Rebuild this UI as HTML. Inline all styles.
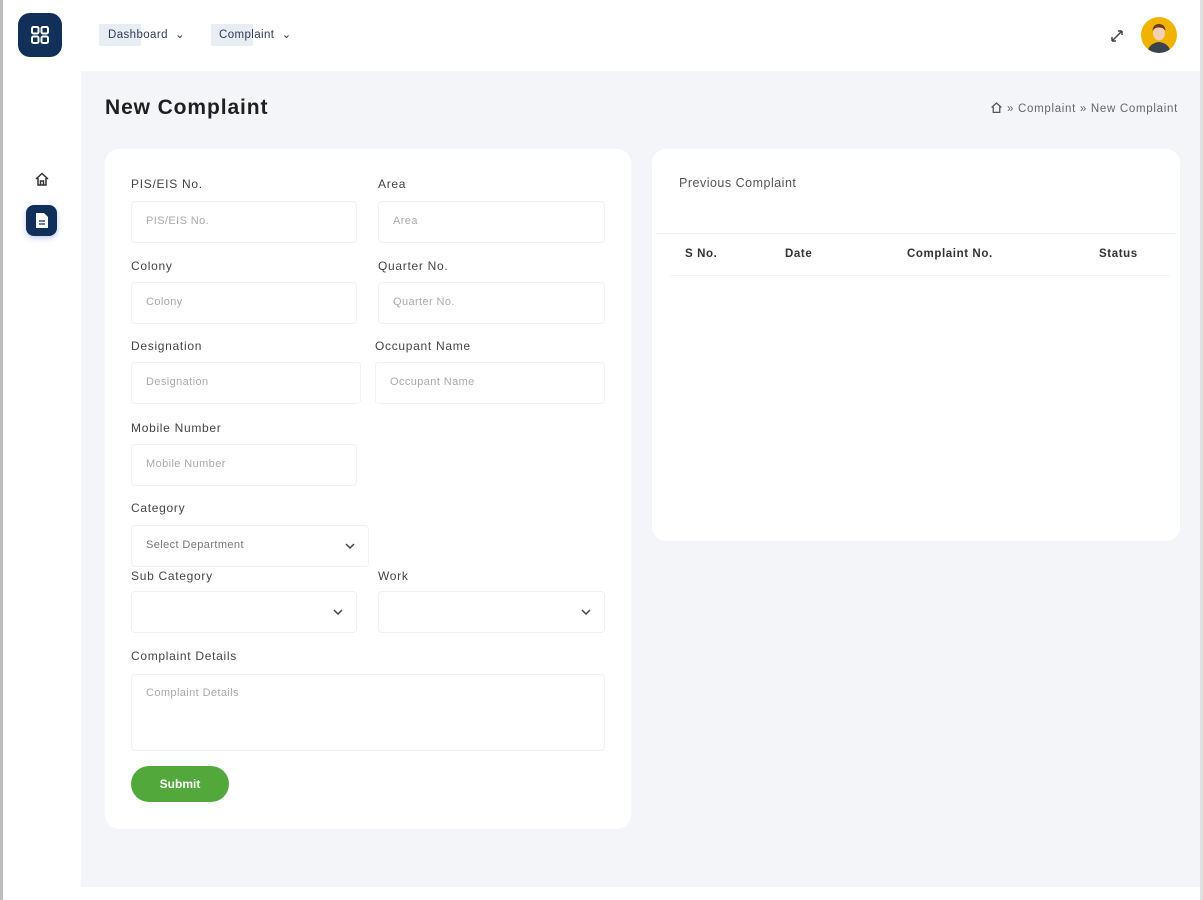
<!DOCTYPE html>
<html><head><meta charset="utf-8"><style>
*{box-sizing:border-box;margin:0;padding:0}
body{width:1203px;height:900px;overflow:hidden;background:#f3f5f9;font-family:"Liberation Sans",sans-serif;position:relative;color:#333}
.abs{position:absolute}
.side{left:0;top:0;width:81px;height:900px;background:#fff;border-left:3px solid #bdbdbd}
.head{left:81px;top:0;width:1122px;height:71px;background:#fff}
.bottom{left:81px;top:887px;width:1122px;height:13px;background:#fff}
.card{background:#fff;border-radius:14px}
.lbl{font-size:12px;color:#444;letter-spacing:.7px}
.inp{border:1px solid #eff1f4;border-radius:4px;height:42px;font-size:11px;color:#aaa;padding:13px 14px;background:#fff;letter-spacing:.4px}
.chev{position:absolute;right:12px;top:14px;width:12px;height:12px}
.th{font-size:11.5px;font-weight:bold;color:#333;top:248px;letter-spacing:.6px}
</style></head><body>
<div class="abs side"></div>
<div class="abs" style="left:18px;top:13px;width:44px;height:44px;border-radius:12px;background:#10305a">
<svg width="44" height="44" viewBox="0 0 44 44"><g fill="none" stroke="#fff" stroke-width="2"><rect x="14" y="14" width="6.5" height="6.5" rx="1.5"/><rect x="23.5" y="14" width="6.5" height="6.5" rx="1.5"/><rect x="14" y="23.5" width="6.5" height="6.5" rx="1.5"/><rect x="23.5" y="23.5" width="6.5" height="6.5" rx="1.5"/></g></svg></div>
<svg class="abs" style="left:34px;top:171px" width="16" height="16" viewBox="0 0 16 16"><path d="M2 8 L8 2.5 L14 8 M4 7 V14 H12 V7 M6.5 14 V10 H9.5 V14" fill="none" stroke="#333" stroke-width="1.5"/></svg>
<div class="abs" style="left:26px;top:205px;width:31px;height:31px;border-radius:8px;background:#10305a;box-shadow:0 2px 6px rgba(80,100,200,.35)">
<svg width="31" height="31" viewBox="0 0 31 31"><path d="M10 8 H18 L22 12 V23 H10 Z" fill="#fff"/><path d="M13 16 H19 M13 19 H19" stroke="#10305a" stroke-width="1.3"/></svg></div>
<div class="abs head"></div>
<div class="abs" style="left:99px;top:24px;width:42px;height:22px;background:#e8edf4"></div>
<div class="abs" style="left:211px;top:24px;width:42px;height:22px;background:#e8edf4"></div>
<div class="abs" style="left:108px;top:27px;font-size:11.5px;color:#2d3b55;letter-spacing:.4px">Dashboard &nbsp;⌄</div>
<div class="abs" style="left:219px;top:27px;font-size:11.5px;color:#2d3b55;letter-spacing:.4px">Complaint &nbsp;⌄</div>
<svg class="abs" style="left:1109px;top:28px" width="16" height="16" viewBox="0 0 16 16"><path d="M3 13 L13 3 M3 13 V9 M3 13 H7 M13 3 H9 M13 3 V7" fill="none" stroke="#444" stroke-width="1.5"/></svg>
<div class="abs" style="left:1141px;top:17px;width:36px;height:36px;border-radius:50%;background:#f0b400;overflow:hidden">
<svg width="36" height="36" viewBox="0 0 36 36"><path d="M6 36 Q8 26 18 25 Q28 26 30 36Z" fill="#3a4450"/><ellipse cx="18" cy="16" rx="6" ry="7.5" fill="#f3d0b0"/><path d="M11.5 14 Q12 7 18 7 Q24 7 24.5 14 Q22 10 18 10.5 Q14 10 11.5 14Z" fill="#6a3b20"/></svg></div>
<div class="abs bottom"></div>
<div class="abs" style="left:105px;top:96px;font-size:21px;font-weight:bold;color:#1f1f1f;letter-spacing:.9px">New Complaint</div>
<div class="abs" style="right:25px;top:101px;font-size:11.5px;color:#666;letter-spacing:.7px;white-space:nowrap">
<svg width="13" height="13" viewBox="0 0 16 16" style="vertical-align:-2px"><path d="M2 8 L8 2.5 L14 8 M4 7 V14 H12 V7" fill="none" stroke="#555" stroke-width="1.6"/></svg> » Complaint » New Complaint</div>

<div class="abs card" style="left:105px;top:149px;width:526px;height:680px"></div>
<div class="abs lbl" style="left:131px;top:177px">PIS/EIS No.</div>
<div class="abs lbl" style="left:378px;top:177px">Area</div>
<div class="abs inp" style="left:131px;top:201px;width:226px">PIS/EIS No.</div>
<div class="abs inp" style="left:378px;top:201px;width:227px">Area</div>
<div class="abs lbl" style="left:131px;top:259px">Colony</div>
<div class="abs lbl" style="left:378px;top:259px">Quarter No.</div>
<div class="abs inp" style="left:131px;top:282px;width:226px">Colony</div>
<div class="abs inp" style="left:378px;top:282px;width:227px">Quarter No.</div>
<div class="abs lbl" style="left:131px;top:339px">Designation</div>
<div class="abs lbl" style="left:375px;top:339px">Occupant Name</div>
<div class="abs inp" style="left:131px;top:362px;width:230px">Designation</div>
<div class="abs inp" style="left:375px;top:362px;width:230px">Occupant Name</div>
<div class="abs lbl" style="left:131px;top:421px">Mobile Number</div>
<div class="abs inp" style="left:131px;top:444px;width:226px">Mobile Number</div>
<div class="abs lbl" style="left:131px;top:501px">Category</div>
<div class="abs inp" style="left:131px;top:525px;width:238px;color:#777">Select Department<svg class="chev" viewBox="0 0 12 12"><path d="M2 4 L6 8 L10 4" fill="none" stroke="#444" stroke-width="1.5"/></svg></div>
<div class="abs lbl" style="left:131px;top:569px">Sub Category</div>
<div class="abs lbl" style="left:378px;top:569px">Work</div>
<div class="abs inp" style="left:131px;top:591px;width:226px"><svg class="chev" viewBox="0 0 12 12"><path d="M2 4 L6 8 L10 4" fill="none" stroke="#444" stroke-width="1.5"/></svg></div>
<div class="abs inp" style="left:378px;top:591px;width:227px"><svg class="chev" viewBox="0 0 12 12"><path d="M2 4 L6 8 L10 4" fill="none" stroke="#444" stroke-width="1.5"/></svg></div>
<div class="abs lbl" style="left:131px;top:649px">Complaint Details</div>
<div class="abs inp" style="left:131px;top:674px;width:474px;height:77px;padding-top:12px">Complaint Details</div>
<div class="abs" style="left:131px;top:766px;width:98px;height:36px;border-radius:18px;background:#52a83a;color:#fff;font-size:12px;font-weight:bold;text-align:center;line-height:36px">Submit</div>

<div class="abs card" style="left:652px;top:149px;width:528px;height:392px"></div>
<div class="abs" style="left:679px;top:176px;font-size:12.5px;color:#555;letter-spacing:.5px">Previous Complaint</div>
<div class="abs" style="left:656px;top:233px;width:520px;height:1px;background:#eef0f3"></div>
<div class="abs" style="left:670px;top:275px;width:500px;height:1px;background:#f2f3f6"></div>
<div class="abs th" style="left:685px">S No.</div>
<div class="abs th" style="left:785px">Date</div>
<div class="abs th" style="left:907px">Complaint No.</div>
<div class="abs th" style="left:1099px">Status</div>
<div class="abs" style="left:1200px;top:0;width:3px;height:900px;background:#e0e0e0"></div>
</body></html>
